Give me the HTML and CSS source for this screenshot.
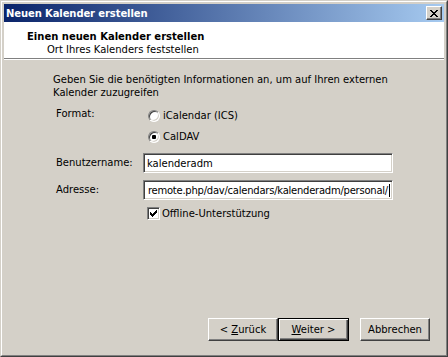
FILE: index.html
```html
<!DOCTYPE html>
<html lang="de">
<head>
<meta charset="utf-8">
<title>Neuen Kalender erstellen</title>
<link rel="stylesheet" href="styles.css">
</head>
<body>
<div class="window">
  <div class="frame">
    <div class="titlebar">
      <span class="title">Neuen Kalender erstellen</span>
      <div class="close-btn">
        <svg width="8" height="7" viewBox="0 0 8 7" shape-rendering="crispEdges"><path d="M0 0h2v1h-2zM6 0h2v1h-2zM1 1h2v1h-2zM5 1h2v1h-2zM2 2h4v1h-4zM3 3h2v1h-2zM2 4h4v1h-4zM1 5h2v1h-2zM5 5h2v1h-2zM0 6h2v1h-2zM6 6h2v1h-2z" fill="#000"/></svg>
      </div>
    </div>
    <div class="header">
      <div class="h-title">Einen neuen Kalender erstellen</div>
      <div class="h-sub">Ort Ihres Kalenders feststellen</div>
    </div>
    <div class="content">
      <p class="intro">Geben Sie die benötigten Informationen an, um auf Ihren externen<br>Kalender zuzugreifen</p>
      <div class="form">
        <div class="label label-format">Format:</div>
        <div class="radios">
          <div class="option"><span class="radio"></span><span>iCalendar (ICS)</span></div>
          <div class="option"><span class="radio checked"><span class="dot"></span></span><span>CalDAV</span></div>
        </div>
        <div class="label">Benutzername:</div>
        <div class="field"><span class="field-text">kalenderadm</span></div>
        <div class="label">Adresse:</div>
        <div class="field field-end"><span class="field-text field-url">remote.php/dav/calendars/kalenderadm/personal/</span><span class="caret"></span></div>
        <div class="spacer"></div>
        <div class="check-row">
          <span class="checkbox">
            <svg width="7" height="7" viewBox="0 0 7 7" shape-rendering="crispEdges"><path d="M0 2h1v3h-1zM1 3h1v3h-1zM2 4h1v3h-1zM3 3h1v3h-1zM4 2h1v3h-1zM5 1h1v3h-1zM6 0h1v3h-1z" fill="#000"/></svg>
          </span>
          <span>Offline-Unterstützung</span>
        </div>
      </div>
      <div class="buttons">
        <div class="btn"><span>&lt; <u>Z</u>urück</span></div>
        <div class="btn btn-default"><span><u>W</u>eiter &gt;</span></div>
        <div class="btn btn-cancel"><span>Abbrechen</span></div>
      </div>
    </div>
  </div>
</div>
</body>
</html>
```
FILE: styles.css
```css
* {
  box-sizing: border-box;
  margin: 0;
  padding: 0;
}

html,
body {
  width: 448px;
  height: 357px;
  background: #d4d0c8;
  overflow: hidden;
}

body {
  font-family: "DejaVu Sans", Verdana, sans-serif;
  font-size: 10px;
  line-height: 13px;
  color: #000;
}

.window {
  width: 448px;
  height: 357px;
  border: 1px solid;
  border-color: #d4d0c8 #404040 #404040 #d4d0c8;
}

.frame {
  height: 100%;
  border: 1px solid;
  border-color: #fff #808080 #808080 #fff;
  padding: 2px;
  display: flex;
  flex-direction: column;
  background: #d4d0c8;
}

.titlebar {
  height: 18px;
  flex: none;
  background: linear-gradient(to right, #0a246a, #a6caf0);
  display: flex;
  align-items: center;
  justify-content: space-between;
  padding: 0 2px;
}

.title {
  color: #fff;
  font-weight: bold;
  letter-spacing: -0.1px;
}

.close-btn {
  width: 16px;
  height: 14px;
  background: #d4d0c8;
  border: 1px solid;
  border-color: #fff #404040 #404040 #fff;
  box-shadow: inset -1px -1px #808080;
  display: flex;
  align-items: center;
  justify-content: center;
}

.close-btn svg {
  display: block;
}

.header {
  height: 37px;
  flex: none;
  background: #fff;
  border-bottom: 1px solid #808080;
  padding: 8px 0 0 23px;
}

.h-title {
  font-weight: bold;
}

.h-sub {
  margin-left: 20px;
}

.content {
  flex: 1;
  border-top: 1px solid #fff;
  display: flex;
  flex-direction: column;
  padding-top: 13px;
}

.intro {
  margin-left: 49px;
}

.form {
  margin: 6px 0 0 52px;
  display: grid;
  grid-template-columns: 87px 250px;
  grid-template-rows: 42px 26px 27px 20px;
}

.label {
  align-self: end;
  line-height: 20px;
}

.label-format {
  align-self: start;
  line-height: 13px;
  padding-top: 2px;
}

.option {
  height: 21px;
  display: flex;
  align-items: center;
  gap: 3px;
}

.radio {
  width: 12px;
  height: 12px;
  margin-left: 5px;
  border-radius: 50%;
  background: #fff;
  border: 1px solid;
  border-color: #808080 #fff #fff #808080;
  box-shadow: inset 1px 1px #404040, inset -1px -1px #d4d0c8;
  display: flex;
  align-items: center;
  justify-content: center;
}

.dot {
  width: 4px;
  height: 4px;
  border-radius: 1px;
  background: #000;
}

.field {
  align-self: end;
  height: 20px;
  background: #fff;
  border: 1px solid;
  border-color: #808080 #fff #fff #808080;
  box-shadow: inset 1px 1px #404040, inset -1px -1px #d4d0c8;
  display: flex;
  align-items: center;
  padding: 0 2px 0 3px;
  overflow: hidden;
  white-space: nowrap;
}

.field-end {
  justify-content: flex-end;
}

.field-text {
  flex: none;
}

.field-url {
  letter-spacing: -0.24px;
}

.caret {
  flex: none;
  width: 1px;
  height: 13px;
  background: #000;
  margin-left: 1px;
}

.check-row {
  align-self: end;
  height: 13px;
  display: flex;
  align-items: center;
  gap: 2px;
}

.checkbox {
  width: 13px;
  height: 13px;
  margin-left: 4px;
  background: #fff;
  border: 1px solid;
  border-color: #808080 #fff #fff #808080;
  box-shadow: inset 1px 1px #404040, inset -1px -1px #d4d0c8;
  display: flex;
  align-items: center;
  justify-content: center;
}

.checkbox svg {
  display: block;
}

.buttons {
  margin-top: auto;
  display: flex;
  justify-content: flex-end;
  padding: 0 14px 12px 0;
}

.btn {
  width: 70px;
  height: 23px;
  border: 1px solid;
  border-color: #fff #404040 #404040 #fff;
  box-shadow: inset -1px -1px #808080;
  display: flex;
  align-items: center;
  justify-content: center;
}

.btn-default {
  width: 71px;
  border-color: #000;
  box-shadow: inset 1px 1px #fff, inset -1px -1px #404040, inset -2px -2px #808080;
}

.btn-cancel {
  margin-left: 11px;
}

u {
  text-decoration: underline;
}
```
